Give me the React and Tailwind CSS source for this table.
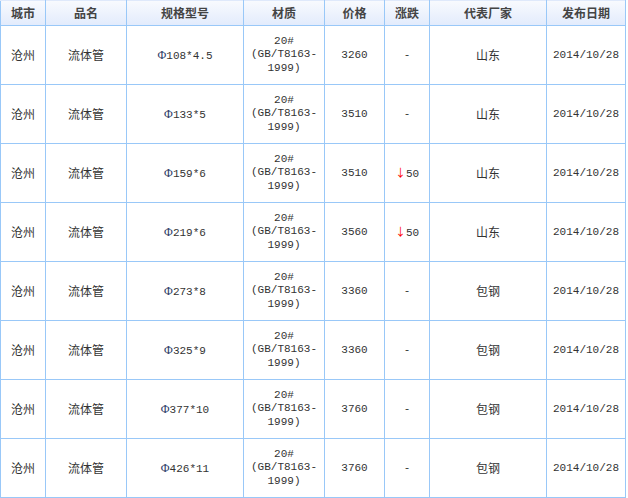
import React from "react";

const headers = ["城市", "品名", "规格型号", "材质", "价格", "涨跌", "代表厂家", "发布日期"];
const widths = ["w-[45px]", "w-[81px]", "w-[117px]", "w-[81px]", "w-[60px]", "w-[45px]", "w-[117px]", "w-[79px]"];

const rows = [
  { spec: "108*4.5", price: "3260", change: null, maker: "山东" },
  { spec: "133*5", price: "3510", change: null, maker: "山东" },
  { spec: "159*6", price: "3510", change: "50", maker: "山东" },
  { spec: "219*6", price: "3560", change: "50", maker: "山东" },
  { spec: "273*8", price: "3360", change: null, maker: "包钢" },
  { spec: "325*9", price: "3360", change: null, maker: "包钢" },
  { spec: "377*10", price: "3760", change: null, maker: "包钢" },
  { spec: "426*11", price: "3760", change: null, maker: "包钢" },
];

const cell = "border border-[#99c8f8] text-center align-middle p-0";
const mono = "font-['Liberation_Mono',monospace] text-[11px]";

export default function App() {
  return (
    <div className="w-[628px] h-[498px] bg-white text-[12px] text-[#333] font-['Noto_Sans_CJK_SC',sans-serif]">
      <table className="table-fixed border-collapse w-[626px]">
        <colgroup>
          {widths.map((w, i) => (
            <col key={i} className={w} />
          ))}
        </colgroup>
        <thead>
          <tr className="h-[25px] bg-gradient-to-b from-[#f8fafe] to-[#e2ebfc]">
            {headers.map((h) => (
              <th key={h} className={`${cell} font-bold text-[#444] border-t-[#dfe9fb]`}>
                {h}
              </th>
            ))}
          </tr>
        </thead>
        <tbody>
          {rows.map((r, i) => (
            <tr key={i} className="h-[59px]">
              <td className={cell}>沧州</td>
              <td className={cell}>流体管</td>
              <td className={`${cell} ${mono}`}>
                <span className="font-['Liberation_Serif',serif] text-[12px] text-[#2b3a67]">Φ</span>
                {r.spec}
              </td>
              <td className={`${cell} ${mono} leading-[13.5px]`}>
                <div>20#</div>
                <div>(GB/T8163-</div>
                <div>1999)</div>
              </td>
              <td className={`${cell} ${mono}`}>{r.price}</td>
              <td className={`${cell} ${mono}`}>
                {r.change ? (
                  <span>
                    <span className="text-[#f00] font-['Noto_Sans_CJK_SC',sans-serif]">↓</span>
                    {r.change}
                  </span>
                ) : (
                  "-"
                )}
              </td>
              <td className={cell}>{r.maker}</td>
              <td className={`${cell} ${mono}`}>2014/10/28</td>
            </tr>
          ))}
        </tbody>
      </table>
    </div>
  );
}
